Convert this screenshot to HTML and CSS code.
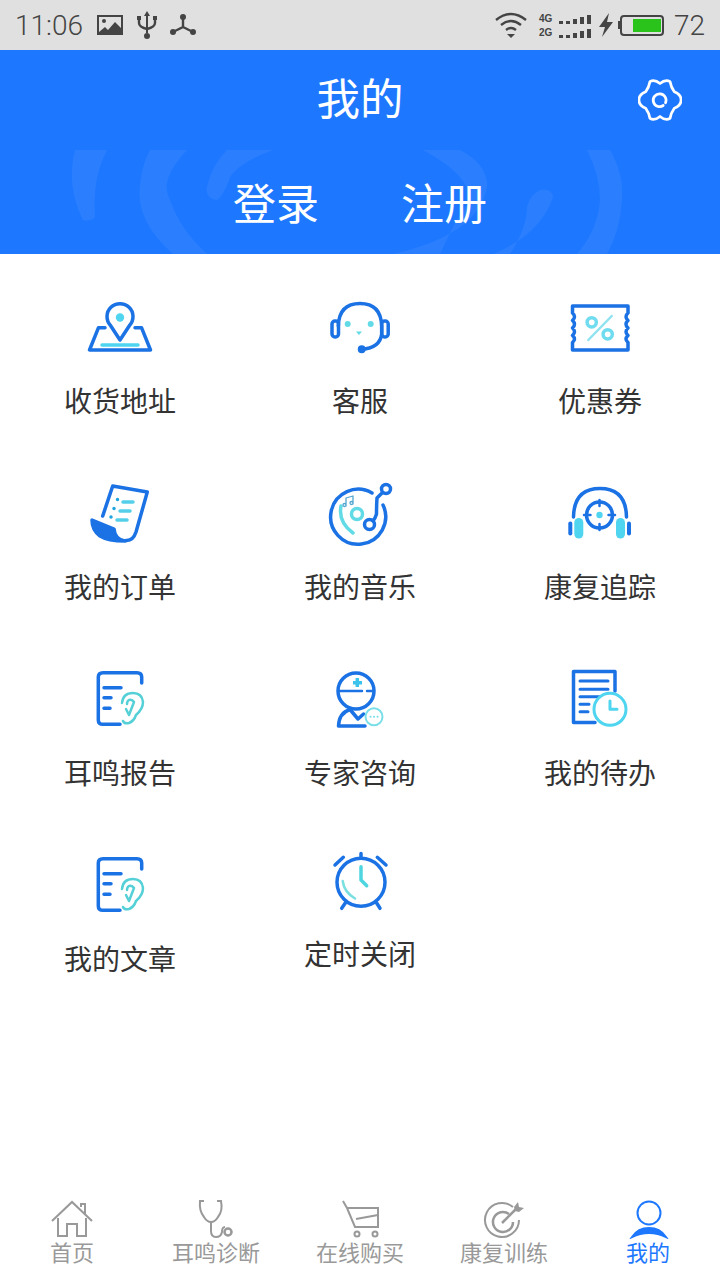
FILE: index.html
```html
<!DOCTYPE html>
<html lang="zh-CN">
<head>
  <meta charset="UTF-8" />
  <meta name="viewport" content="width=device-width, initial-scale=1.0"/>
  <title>我的</title>
  <link rel="stylesheet" href="styles.css">
</head>
<body>
  <div class="page">
    <div class="statusbar">
      <div class="status-left">
        <span class="status-num">11:06</span>
        <svg class="st-pic" width="28" height="22" viewBox="0 0 28 22"><path d="M1 1h26v20H1z" fill="#444"/><path d="M3 3h22v11l-6-6-7 8-3-3-6 5z" fill="#e0e0e0"/><circle cx="8" cy="7" r="2" fill="#444"/></svg>
        <svg class="st-usb" width="22" height="30" viewBox="0 0 22 30"><path d="M11 1l3 5h-2v17h-2V6H8z" fill="#444"/><circle cx="11" cy="26" r="3" fill="#444"/><path d="M3 8v5q0 4 8 6q8-2 8-6V8" fill="none" stroke="#444" stroke-width="2.4"/><path d="M1 6h4v4H1zM17 6h4v4h-4z" fill="#444"/></svg>
        <svg class="st-net" width="28" height="26" viewBox="0 0 28 26"><path d="M14 5v10L4 20M14 15l10 5" fill="none" stroke="#444" stroke-width="2.4"/><circle cx="14" cy="5" r="3" fill="#444"/><circle cx="4" cy="20" r="3" fill="#444"/><circle cx="24" cy="20" r="3" fill="#444"/></svg>
      </div>
      <div class="status-right">
        <svg class="st-wifi" width="34" height="28" viewBox="0 0 34 28"><path d="M2 9q15-12 30 0M7 14q10-8 20 0M12 19q5-4 10 0" fill="none" stroke="#444" stroke-width="2.4"/><path d="M13 23h8l-4 4z" fill="#444"/></svg>
        <div class="signal">
          <div class="signal-row"><span class="signal-tag">4G</span><i class="bar b1"></i><i class="bar b1"></i><i class="bar b2"></i><i class="bar b3"></i><i class="bar b4"></i></div>
          <div class="signal-row"><span class="signal-tag">2G</span><i class="bar b1"></i><i class="bar b1"></i><i class="bar b2"></i><i class="bar b3"></i><i class="bar b4"></i></div>
        </div>
        <svg class="st-bolt" width="16" height="24" viewBox="0 0 16 24"><path d="M11 0L1 14h6l-3 10 11-15H9z" fill="#444"/></svg>
        <div class="battery-nub"></div>
        <div class="battery"><div class="battery-fill"></div></div>
        <span class="status-num">72</span>
      </div>
    </div>

    <div class="header">
      <svg class="header-waves" width="720" height="204" viewBox="0 0 720 204">
        <g fill="#fff" fill-opacity="0.06">
          <path d="M75 100H107Q92 128 95 167Q90 172 83 170Q66 135 75 100z"/>
          <path d="M150 100H187Q158 130 170 150Q180 180 207 204H173Q135 170 140 135Q142 115 150 100z"/>
          <path d="M227 100H273Q240 112 230 127Q224 145 217 150Q205 148 207 137Q212 115 227 100z"/>
          <path d="M423 100H460Q488 115 487 137Q478 185 393 204H440Q455 170 470 150Q470 125 423 100z"/>
          <path d="M540 140Q552 138 553 147Q540 185 493 204H510Q527 178 527 157Q530 145 540 140z"/>
          <path d="M587 100H610Q624 125 622 150Q620 180 607 204H577Q598 180 600 150Q600 125 587 100z"/>
        </g>
      </svg>
      <div class="title-row">
        <span></span>
        <h1 class="title">我的</h1>
        <svg class="gear" width="44" height="44" viewBox="0 0 48 48" fill="none" stroke="#fff" stroke-width="3" stroke-linecap="round"><path d="M24 6Q30 1 35 4Q36 10 39.600 15Q47 18 47 24Q47 30 39.600 33Q36 38 35 44Q30 47 24 42Q18 47 13 44Q12 38 8.400 33Q1 30 1 24Q1 18 8.400 15Q12 10 13 4Q18 1 24 6z" stroke-linejoin="round"/><path d="M30 27A7 7 0 1 0 27.500 30"/></svg>
      </div>
      <div class="auth-row">
        <span>登录</span>
        <span>注册</span>
      </div>
    </div>

    <div class="menu">
      <div class="cell">
        <svg class="cell-icon" viewBox="0 0 72 72" fill="none" stroke="#1b72e4" stroke-width="3.500" stroke-linecap="round" stroke-linejoin="round">
          <path d="M36 48L26.500 33.500A13 13 0 1 1 45.500 33.500z"/>
          <path d="M21 35.700H14.500L5.500 58H66.500L57.500 35.700H51"/>
          <circle cx="36" cy="25.500" r="4.200" fill="#4fd5ef" stroke="none"/>
          <path d="M18 53H54" stroke="#4fd5ef"/>
        </svg>
        <span class="cell-label">收货地址</span>
      </div>
      <div class="cell">
        <svg class="cell-icon" viewBox="0 0 72 72" fill="none" stroke="#1b72e4" stroke-width="3.500" stroke-linecap="round" stroke-linejoin="round">
          <path d="M14.300 34Q15 11.500 36 11.500Q57 11.500 57.700 34V42Q56 56 37.700 57.300"/>
          <rect x="8" y="29" width="6.500" height="16" rx="3"/>
          <rect x="57.700" y="29" width="6.500" height="16" rx="3"/>
          <circle cx="37.700" cy="57.300" r="2.200" fill="#1b72e4"/>
          <circle cx="23.700" cy="32" r="3" fill="#62dbe6" stroke="none"/>
          <circle cx="46.700" cy="32" r="3" fill="#62dbe6" stroke="none"/>
          <path d="M32 39.500H38L35 43z" fill="#62dbe6" stroke="none"/>
        </svg>
        <span class="cell-label">客服</span>
      </div>
      <div class="cell">
        <svg class="cell-icon" viewBox="0 0 72 72" fill="none" stroke="#1b72e4" stroke-width="3.500" stroke-linecap="round" stroke-linejoin="round">
          <path d="M8.500 14H64V21Q60 24.500 64 28.500Q60 32 64 36Q60 39.500 64 43.500Q60 47 64 50.500V58H8.500V50.500Q12.500 47 8.500 43.500Q12.500 39.500 8.500 36Q12.500 32 8.500 28.500Q12.500 24.500 8.500 21z"/>
          <circle cx="27.700" cy="30.300" r="4.600" stroke="#6fdcf0"/>
          <circle cx="43.700" cy="42.300" r="4.600" stroke="#6fdcf0"/>
          <path d="M47.700 24L24.300 48" stroke="#8fe3f0" stroke-width="2.500"/>
        </svg>
        <span class="cell-label">优惠券</span>
      </div>

      <div class="cell">
        <svg class="cell-icon" viewBox="0 0 72 72" fill="none" stroke="#1b72e4" stroke-width="3.500" stroke-linecap="round" stroke-linejoin="round">
          <path d="M18.700 38L28.700 8L63.300 14L52 54Q49 63 42 62.500"/>
          <path d="M8 42L30 51Q31 62 41 63Q24 63 16 58Q8 52 8 42z" fill="#1b72e4"/>
          <path d="M39 24H49M36 33H46M33 42H43" stroke="#55cfe9" stroke-width="3.500"/>
          <path d="M33.500 21.500v.1M30 30.500v.1M27 39v.1" stroke="#1ea5e0" stroke-width="3.500"/>
        </svg>
        <span class="cell-label">我的订单</span>
      </div>
      <div class="cell">
        <svg class="cell-icon" viewBox="0 0 72 72" fill="none" stroke="#1b72e4" stroke-width="3.500" stroke-linecap="round" stroke-linejoin="round">
          <path d="M48 15A27.500 27.500 0 1 0 59 27"/>
          <path d="M58.500 14.500L53 20Q52.500 28 52.500 36Q51 41 49 43"/>
          <circle cx="62" cy="11" r="4.500"/>
          <circle cx="45.500" cy="46.500" r="5"/>
          <circle cx="33" cy="36" r="5.500" stroke="#62dbe6"/>
          <path d="M17 28Q14 44 29 55" stroke="#62dbe6"/>
          <path d="M22 28V20L29 18V26M22 27a1.500 1.500 0 1 1-3 0a1.500 1.500 0 1 1 3 0M29 25a1.500 1.500 0 1 1-3 0a1.500 1.500 0 1 1 3 0" stroke="#4fa5d0" stroke-width="1.300"/>
        </svg>
        <span class="cell-label">我的音乐</span>
      </div>
      <div class="cell">
        <svg class="cell-icon" viewBox="0 0 72 72" fill="none" stroke="#1b72e4" stroke-width="3.500" stroke-linecap="round" stroke-linejoin="round">
          <path d="M9.500 39Q10 10.500 36 10.500Q62 10.500 62.500 39"/>
          <circle cx="35.500" cy="37" r="13"/>
          <path d="M35.500 22V28M35.500 46V52M20 37H26.500M44.500 37H51" stroke-width="2.500"/>
          <circle cx="35.500" cy="37" r="3.200" fill="#4fd5ef" stroke="none"/>
          <rect x="10.300" y="40" width="9" height="20.500" rx="4.500" fill="#4fd5ef" stroke="none"/>
          <rect x="52" y="40" width="9" height="20.500" rx="4.500" fill="#4fd5ef" stroke="none"/>
          <rect x="4.300" y="43.500" width="4" height="14" rx="2" fill="#1b72e4" stroke="none"/>
          <rect x="63" y="43.500" width="4" height="14" rx="2" fill="#1b72e4" stroke="none"/>
        </svg>
        <span class="cell-label">康复追踪</span>
      </div>

      <div class="cell">
        <svg class="cell-icon" viewBox="0 0 72 72" fill="none" stroke="#1b72e4" stroke-width="3.500" stroke-linecap="round" stroke-linejoin="round">
          <path d="M57.700 19V13Q57.700 8.700 53 8.700H19Q14.300 8.700 14.300 13V56Q14.300 60.300 19 60.300H36"/>
          <path d="M20 23.700H37M20 33.700H27M20 44.300H26"/>
          <path d="M39 57Q40 60 45 59Q50 57 52 51Q59 45 59 38Q58 29 49 29Q39 29 38 39M45 51L50 38Q48 35 45 36Q43 37 43 40M45 51L42 45" stroke="#54d0d6" stroke-width="2.500"/>
        </svg>
        <span class="cell-label">耳鸣报告</span>
      </div>
      <div class="cell">
        <svg class="cell-icon" viewBox="0 0 72 72" fill="none" stroke="#1b72e4" stroke-width="3.500" stroke-linecap="round" stroke-linejoin="round">
          <circle cx="32" cy="27" r="18"/>
          <path d="M14.500 27H38M43 27H49.500" stroke-width="2.500"/>
          <path d="M33.300 14V23M29 18.700H38" stroke="#3cc3ec" stroke-width="3.500" stroke-linecap="butt"/>
          <path d="M14.500 62H41M14.500 62Q15 49 26 45.500L34 55L39.500 50"/>
          <circle cx="50" cy="52.700" r="8.500" stroke="#7adfe8" stroke-width="2"/>
          <path d="M46.500 52.700h.1M50 52.700h.1M53.500 52.700h.1" stroke="#7adfe8" stroke-width="2"/>
        </svg>
        <span class="cell-label">专家咨询</span>
      </div>
      <div class="cell">
        <svg class="cell-icon" viewBox="0 0 72 72" fill="none" stroke="#1b72e4" stroke-width="3.500" stroke-linecap="round" stroke-linejoin="round">
          <path d="M9.500 7.500H51V27M31 58.500H9.500V7.500"/>
          <path d="M16 17H44M16 25.300H44M16 32.700H36M16 40.300H25M16 47.700H24" stroke-width="3"/>
          <circle cx="46" cy="45.300" r="16" fill="#fff" stroke="#4fd5ef" stroke-width="3"/>
          <path d="M46 37V45.300H53" stroke="#4fd5ef" stroke-width="3"/>
        </svg>
        <span class="cell-label">我的待办</span>
      </div>

      <div class="cell">
        <svg class="cell-icon" viewBox="0 0 72 72" fill="none" stroke="#1b72e4" stroke-width="3.500" stroke-linecap="round" stroke-linejoin="round">
          <path d="M57.700 19V13Q57.700 8.700 53 8.700H19Q14.300 8.700 14.300 13V56Q14.300 60.300 19 60.300H36"/>
          <path d="M20 23.700H37M20 33.700H27M20 44.300H26"/>
          <path d="M39 57Q40 60 45 59Q50 57 52 51Q59 45 59 38Q58 29 49 29Q39 29 38 39M45 51L50 38Q48 35 45 36Q43 37 43 40M45 51L42 45" stroke="#54d0d6" stroke-width="2.500"/>
        </svg>
        <span class="cell-label">我的文章</span>
      </div>
      <div class="cell cell-up">
        <svg class="cell-icon" viewBox="0 0 72 72" fill="none" stroke="#1b72e4" stroke-width="3.500" stroke-linecap="round" stroke-linejoin="round">
          <circle cx="37" cy="36.300" r="24"/>
          <path d="M11 19L19.300 11.300M53.300 11.300L62 19M37 7.500V12M17.700 62.300L22 56M56 62.300L52 56"/>
          <path d="M37 20.700V34L42.700 39.700" stroke="#4fd5e0"/>
          <path d="M18.700 35Q20 46 31 52.500" stroke="#7adfe0" stroke-width="2.500"/>
        </svg>
        <span class="cell-label">定时关闭</span>
      </div>
    </div>

    <div class="tabbar">
      <div class="tab">
        <svg class="tab-icon" viewBox="0 0 48 40" fill="none" stroke="#999" stroke-width="2"><path d="M4 22L24 3L44 22M33 8V5H37V15"/><path d="M10 19V37H19V25H29V37H38V19"/></svg>
        <span class="tab-label">首页</span>
      </div>
      <div class="tab">
        <svg class="tab-icon" viewBox="0 0 48 40" fill="none" stroke="#999" stroke-width="2"><path d="M12 2H8Q7 12 12 18Q15 23 19 23Q23 23 26 18Q31 12 29 2H25"/><path d="M19 23V32Q19 38 24 38Q29 38 30 33Q30 28 33 28"/><circle cx="36" cy="33" r="3.500" stroke-width="2.500"/></svg>
        <span class="tab-label">耳鸣诊断</span>
      </div>
      <div class="tab">
        <svg class="tab-icon" viewBox="0 0 48 40" fill="none" stroke="#999" stroke-width="2"><path d="M7 2L11 9L19 28H42V9H11"/><path d="M20 20L42 16"/><circle cx="21" cy="35" r="2.500"/><circle cx="39" cy="35" r="2.500"/></svg>
        <span class="tab-label">在线购买</span>
      </div>
      <div class="tab">
        <svg class="tab-icon" viewBox="0 0 48 40" fill="none" stroke="#999" stroke-width="2"><path d="M33 8A17 17 0 1 0 39 21"/><path d="M29 15A10 10 0 1 0 33 23" stroke-width="2.500"/><path d="M22 24L36 10" stroke-width="2.500"/><path d="M34 8L38 3L39 8L44 9L39 13L35 12z" fill="#999" stroke="none"/></svg>
        <span class="tab-label">康复训练</span>
      </div>
      <div class="tab tab-active">
        <svg class="tab-icon" viewBox="0 0 48 40" fill="none" stroke="#1e78ff" stroke-width="2"><circle cx="25" cy="14" r="11.500"/><path d="M8 38Q14 29 25 29Q36 29 42 38Q34 34 25 34Q16 34 8 38z" fill="#1e78ff"/></svg>
        <span class="tab-label">我的</span>
      </div>
    </div>
  </div>
</body>
</html>
```

FILE: styles.css
```css
body {
  margin: 0;
  background-color: #fff;
  font-family: "Noto Sans CJK SC", "Noto Sans", sans-serif;
  color: #333;
}

.page {
  display: flex;
  flex-direction: column;
  width: 720px;
  height: 1280px;
  overflow: hidden;
}

/* status bar */
.statusbar {
  display: flex;
  justify-content: space-between;
  align-items: center;
  height: 50px;
  padding: 0 15px;
  box-sizing: border-box;
  background-color: #e0e0e0;
  color: #444;
}

.status-left,
.status-right {
  display: flex;
  align-items: center;
}

.status-num {
  font-family: Roboto, sans-serif;
  font-weight: 300;
  font-size: 28px;
}

.st-pic {
  margin-left: 13px;
}

.st-usb {
  margin-left: 12px;
}

.st-net {
  margin-left: 11px;
}

.status-right .status-num {
  margin-left: 10px;
}

.signal {
  display: flex;
  flex-direction: column;
  gap: 3px;
  margin-left: 11px;
}

.signal-row {
  display: flex;
  align-items: flex-end;
  height: 11px;
  gap: 3px;
}

.signal-tag {
  width: 17px;
  font-family: "Liberation Sans", sans-serif;
  font-size: 10px;
  line-height: 11px;
  font-weight: bold;
  color: #444;
}

.bar {
  width: 4px;
  background-color: #444;
}

.b1 { height: 3px; }
.b2 { height: 5px; }
.b3 { height: 7px; }
.b4 { height: 9px; }

.st-bolt {
  margin-left: 7px;
}

.battery-nub {
  width: 2px;
  height: 8px;
  margin-left: 4px;
  background-color: #444;
}

.battery {
  display: flex;
  justify-content: flex-end;
  width: 44px;
  height: 21px;
  padding: 2px 1px;
  box-sizing: border-box;
  border: 2px solid #444;
  border-radius: 4px;
}

.battery-fill {
  width: 28px;
  background-color: #2ac31c;
}

/* blue header */
.header {
  position: relative;
  height: 204px;
  background-color: #1e78ff;
  color: #fff;
}

.header-waves {
  position: absolute;
  left: 0;
  top: 0;
}

.title-row {
  position: relative;
  display: grid;
  grid-template-columns: 1fr auto 1fr;
  align-items: center;
  height: 100px;
  padding-right: 38px;
  padding-left: 38px;
}

.title {
  margin: 0 0 6px;
  font-size: 43.5px;
  font-weight: 400;
  line-height: 94px;
}

.gear {
  justify-self: end;
}

.auth-row {
  position: relative;
  display: flex;
  justify-content: center;
  gap: 82px;
  padding-bottom: 2px;
  font-size: 43px;
  line-height: 102px;
}

/* menu grid */
.menu {
  flex: 1;
  display: grid;
  grid-template-columns: repeat(3, 240px);
  grid-auto-rows: 186px;
  align-content: start;
}

.cell {
  display: flex;
  flex-direction: column;
  align-items: center;
  padding-top: 38px;
}

.cell-up {
  margin-top: -4px;
}

.cell-icon {
  width: 72px;
  height: 72px;
}

.cell-label {
  margin-top: 16px;
  font-size: 28px;
  line-height: 40px;
}

.cell-up .cell-label {
  margin-top: 15px;
}

/* bottom tabs */
.tabbar {
  display: grid;
  grid-template-columns: repeat(5, 144px);
  height: 81px;
}

.tab {
  display: flex;
  flex-direction: column;
  align-items: center;
}

.tab-icon {
  width: 48px;
  height: 40px;
}

.tab-label {
  font-size: 22px;
  line-height: 24px;
  color: #999;
}

.tab-active .tab-label {
  color: #1e78ff;
}
```
